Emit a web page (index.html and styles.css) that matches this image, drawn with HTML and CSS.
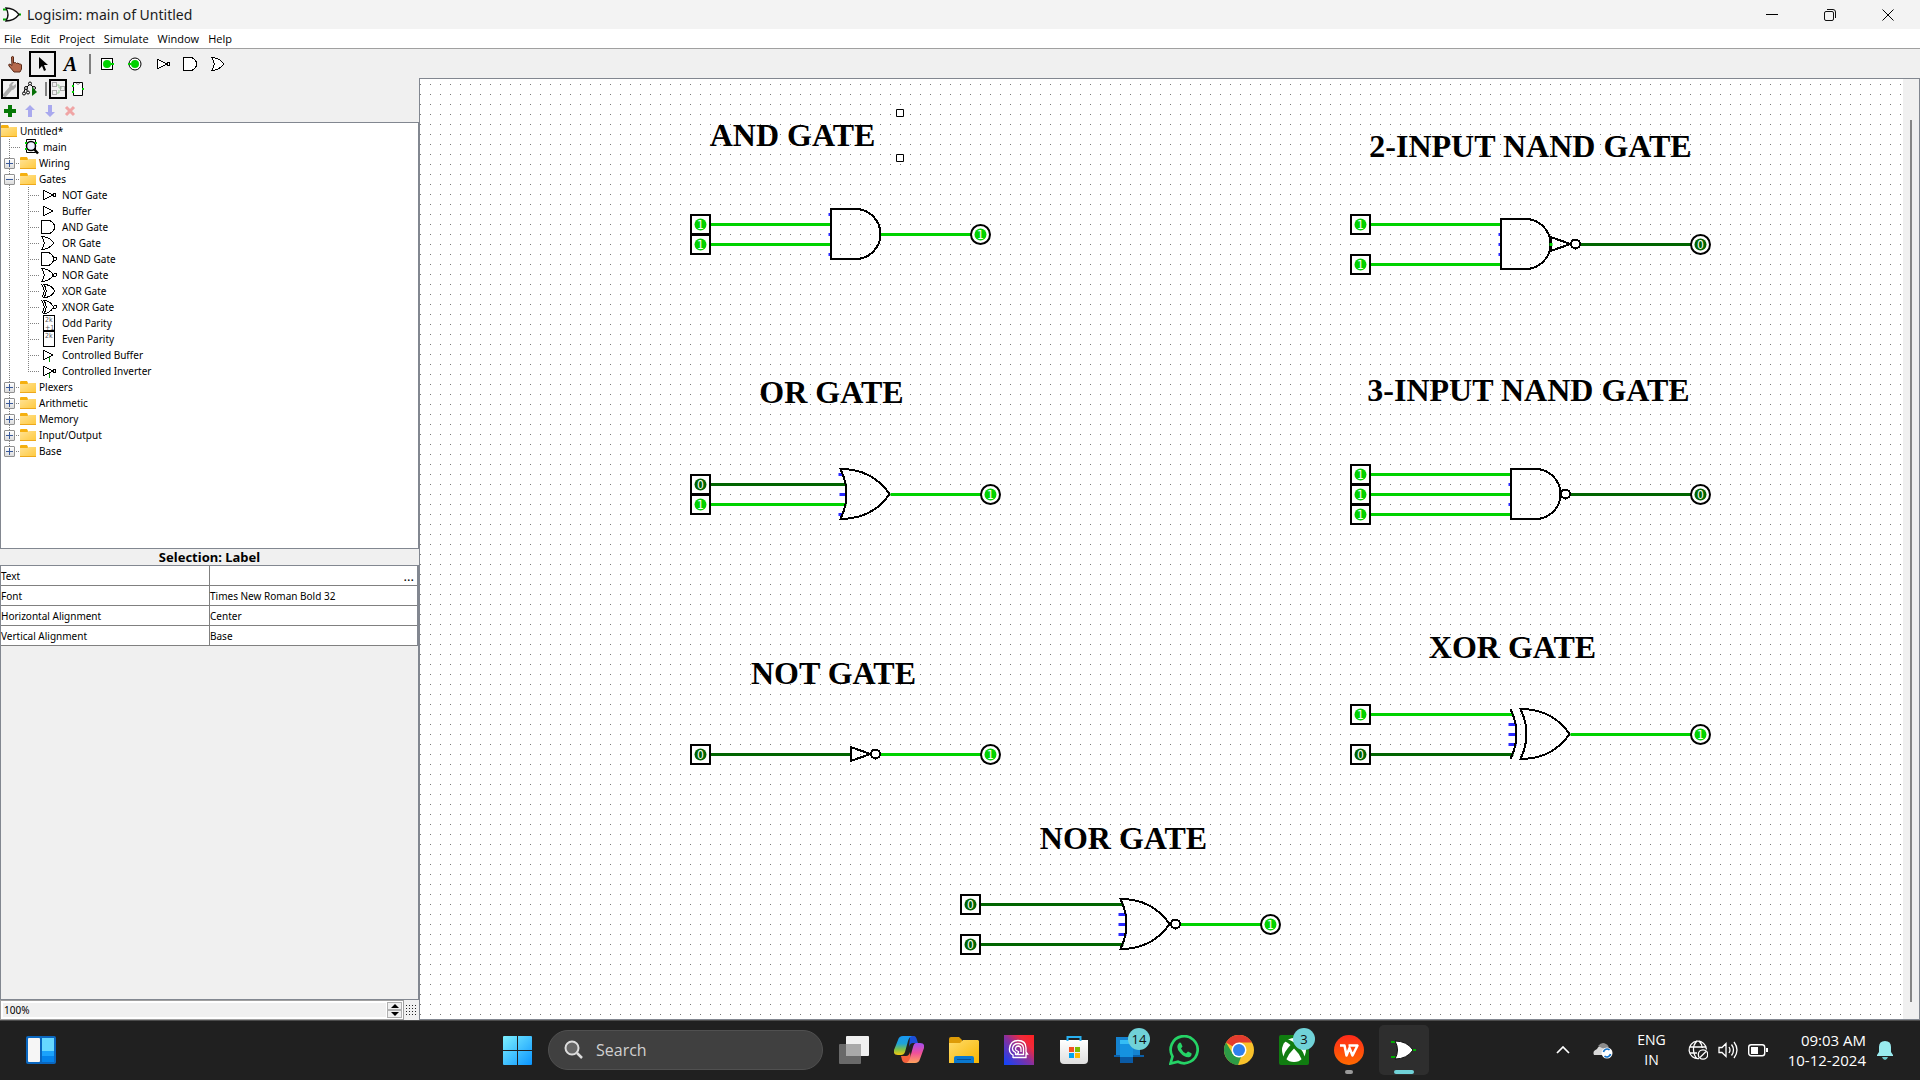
FILE: index.html
```html
<!DOCTYPE html>
<html lang="en">
<head>
<meta charset="utf-8">
<title>Logisim: main of Untitled</title>
<link rel="stylesheet" href="styles.css">
</head>
<body>
<svg class="defs" aria-hidden="true">
  <defs>
    <linearGradient id="folder-fill" x1="0" y1="0" x2="1" y2="1"><stop offset="0" stop-color="#ffe294"/><stop offset="1" stop-color="#ffc93c"/></linearGradient>
    <symbol id="i-folder" viewBox="0 0 16 16"><path d="M0 3q0-1 1-1h6l1 2v3H0z" fill="#f5b010"/><path d="M0 5h7l2-1h7v10H0z" fill="url(#folder-fill)"/><path d="M0 13.500h16" stroke="#eda81c"/></symbol>
    <symbol id="i-not" viewBox="0 0 16 16"><path d="M2 3v10L12 8z"/><circle cx="13.500" cy="8" r="1.500"/></symbol>
    <symbol id="i-buffer" viewBox="0 0 16 16"><path d="M2 3v10L12 8z"/></symbol>
    <symbol id="i-and" viewBox="0 0 16 16"><path d="M.5 1.500H7a6.500 6.500 0 0 1 0 13H.5z"/></symbol>
    <symbol id="i-or" viewBox="0 0 16 16"><path d="M.5 1.500Q8 1.500 13 8Q8 14.500 .5 14.500Q6 8 .5 1.500z"/></symbol>
    <symbol id="i-nand" viewBox="0 0 16 16"><path d="M.5 1.500H6a6.500 6.500 0 0 1 0 13H.5z"/><circle cx="14" cy="8" r="1.500"/></symbol>
    <symbol id="i-nor" viewBox="0 0 16 16"><path d="M.5 1.500Q8 1.500 12.500 8Q8 14.500 .5 14.500Q6 8 .5 1.500z"/><circle cx="14" cy="8" r="1.500"/></symbol>
    <symbol id="i-xor" viewBox="0 0 16 16"><path d="M3 1.500Q10 1.500 14 8Q10 14.500 3 14.500Q7.500 8 3 1.500zM.5 1.500Q6 8 .5 14.500"/></symbol>
    <symbol id="i-xnor" viewBox="0 0 16 16"><path d="M3 1.500Q9 1.500 12.500 8Q9 14.500 3 14.500Q7.500 8 3 1.500zM.5 1.500Q6 8 .5 14.500"/><circle cx="14" cy="8" r="1.500"/></symbol>
    <symbol id="i-cbuf" viewBox="0 0 16 16"><path d="M2 3v10L12 8z"/><path d="M8.500 10v5" stroke="#009000"/></symbol>
    <symbol id="i-cinv" viewBox="0 0 16 16"><path d="M2 3v10L12 8z"/><circle cx="13.500" cy="8" r="1.500"/><path d="M8.500 10v5" stroke="#009000"/></symbol>
    <symbol id="i-odd" viewBox="0 0 16 16"><path d="M2.500 .5h11v15h-11z"/><text class="parity" x="4" y="7">2k</text><text class="parity" x="4" y="15">+1</text></symbol>
    <symbol id="i-even" viewBox="0 0 16 16"><path d="M2.500 .5h11v15h-11z"/><text class="parity" x="4" y="7">2k</text></symbol>
    <symbol id="pin-in" viewBox="-11 -11 22 22"><rect x="-9.500" y="-9.500" width="19" height="19" fill="none" stroke="#000" stroke-width="2"/><circle r="6"/></symbol>
    <symbol id="pin-out" viewBox="-11 -11 22 22"><circle r="9.500" fill="#fff" stroke="#000" stroke-width="2"/><circle r="6"/></symbol>
    <pattern id="dots" width="10" height="10" y="5" patternUnits="userSpaceOnUse"><rect width="1" height="1" fill="#777"/></pattern>
    <linearGradient id="win" x1="0" y1="0" x2="1" y2="1"><stop offset="0" stop-color="#7df0ff"/><stop offset="1" stop-color="#0a95ff"/></linearGradient>
    <linearGradient id="cop-a" x1="0" y1="0" x2="0" y2="1"><stop offset="0" stop-color="#1797f2"/><stop offset=".4" stop-color="#1fa3d8"/><stop offset=".7" stop-color="#7cc04a"/><stop offset="1" stop-color="#f6c90e"/></linearGradient>
    <linearGradient id="cop-b" x1="0" y1="0" x2="0" y2="1"><stop offset="0" stop-color="#a34df0"/><stop offset=".5" stop-color="#f0509a"/><stop offset="1" stop-color="#ffa35c"/></linearGradient>
    <linearGradient id="exp" x1="0" y1="0" x2="1" y2="1"><stop offset="0" stop-color="#ffdc6b"/><stop offset="1" stop-color="#f7b500"/></linearGradient>
    <linearGradient id="pur" x1="0" y1="1" x2="1" y2="0"><stop offset="0" stop-color="#0a45ff"/><stop offset=".5" stop-color="#8a2f9c"/><stop offset=".75" stop-color="#f02a3c"/><stop offset="1" stop-color="#ff2020"/></linearGradient>
    <linearGradient id="wps" x1="0" y1="0" x2="0" y2="1"><stop offset="0" stop-color="#ff2a1a"/><stop offset="1" stop-color="#ff6a00"/></linearGradient>
    <linearGradient id="store" x1="0" y1="0" x2="0" y2="1"><stop offset="0" stop-color="#fff"/><stop offset="1" stop-color="#dedede"/></linearGradient>
  </defs>
</svg>

<div class="window">
  <header class="titlebar">
    <svg class="app-icon" width="18" height="16" viewBox="0 0 18 16"><path d="M0 2.500h4M0 12.500h4M16 7.500h2" stroke="#0a0" stroke-width="2"/><path d="M3 1Q11 1 16 7.500Q11 14 3 14Q7 7.500 3 1z" fill="#fff" stroke="#111" stroke-width="1.300"/></svg>
    <h1>Logisim: main of Untitled</h1>
    <div class="win-controls">
      <button aria-label="Minimize"><svg width="12" height="12"><path d="M0 5.500h12" stroke="#000"/></svg></button>
      <button aria-label="Restore"><svg width="12" height="12" fill="none" stroke="#111"><rect x=".5" y="2.500" width="9" height="9" rx="1.500"/><path d="M3 .5h6q2.500 0 2.500 2.500v6"/></svg></button>
      <button aria-label="Close"><svg width="12" height="12"><path d="M.5 .5l11 11M11.500 .5l-11 11" stroke="#000"/></svg></button>
    </div>
  </header>
  <nav class="menubar">
    <button>File</button><button>Edit</button><button>Project</button><button>Simulate</button><button>Window</button><button>Help</button>
  </nav>

  <div class="toolbar">
    <button aria-label="Poke tool"><svg width="18" height="18" viewBox="0 0 18 18"><path d="M5.500 2q1.500-1.500 2 0v6l2-.5 1 1 1.500-.5 1 1q2-.5 2.500 1v4L14 17H8L3 11q-1-2 1-2l2 1.500z" fill="#b5694c" stroke="#5a2a18"/></svg></button>
    <button class="on" aria-label="Edit tool"><svg width="18" height="18" viewBox="0 0 18 18"><path d="M5 2v12l3-3 2 5 2-1-2-5h4z" fill="#000"/></svg></button>
    <button class="text-tool" aria-label="Text tool">A</button>
    <span class="sep"></span>
    <button aria-label="Input pin"><svg width="16" height="16"><rect x="2.500" y="2.500" width="11" height="11" fill="#fff" stroke="#000"/><circle cx="8" cy="8" r="4" fill="#00d200"/><path d="M12 8h3" stroke="#00d200" stroke-width="2"/></svg></button>
    <button aria-label="Output pin"><svg width="16" height="16"><circle cx="8" cy="8" r="6" fill="#fff" stroke="#000"/><circle cx="8" cy="8" r="4" fill="#00d200"/><path d="M1 8h3" stroke="#00d200" stroke-width="2"/></svg></button>
    <button aria-label="NOT gate"><svg class="gate" width="16" height="16"><use href="#i-not"/></svg></button>
    <button aria-label="AND gate"><svg class="gate" width="16" height="16"><use href="#i-and"/></svg></button>
    <button aria-label="OR gate"><svg class="gate" width="16" height="16"><use href="#i-or"/></svg></button>
  </div>

  <div class="work">
    <aside class="sidebar">
      <div class="views">
        <button class="on" aria-label="View toolbox"><svg width="14" height="16"><path d="M2 14l6-7" stroke="#aaa" stroke-width="4" stroke-linecap="round"/><path d="M7 8L6 4l3-3h2L9 4l1 1 3-2v3l-3 3z" fill="#aaa"/></svg></button>
        <button aria-label="View simulation tree"><svg width="16" height="16" fill="none" stroke="#000"><path d="M7 4L5 6M9 4l2 2M3 8l-1 3M5 8v2"/><circle cx="8" cy="2.500" r="1.500"/><circle cx="4" cy="7" r="1.500"/><circle cx="12" cy="7" r="1.500"/><circle cx="2" cy="12.500" r="1.500"/><circle cx="6" cy="11.500" r="1.500"/><path d="M10 6v9l5-4z" fill="#067006" stroke="none"/></svg></button>
        <span class="sep"></span>
        <button class="on" aria-label="Edit circuit layout"><svg width="14" height="16" fill="none" stroke="#aaa"><path d="M5 4h3v3h3M5 12h3V9" stroke="#9c9"/><rect x="1.500" y="1.500" width="4" height="4"/><rect x="1.500" y="9.500" width="4" height="4"/><rect x="9.500" y="5.500" width="4" height="4"/></svg></button>
        <button aria-label="Edit circuit appearance"><svg width="14" height="16"><path d="M2.500 1.500h9v13h-9z" fill="#fff" stroke="#000"/><path d="M5 2q2 3 4 0" fill="none" stroke="#888"/><path d="M1 5h2M1 11h2M11 8h2" stroke="#00d200" stroke-width="2"/></svg></button>
      </div>
      <div class="edits">
        <button aria-label="Add circuit"><svg width="12" height="12"><path d="M6 0v12M0 6h12" stroke="#067806" stroke-width="4"/></svg></button>
        <button aria-label="Move circuit up"><svg width="12" height="12"><path d="M6 0l5 5H8v7H4V5H1z" fill="#a9a9ee"/></svg></button>
        <button aria-label="Move circuit down"><svg width="12" height="12"><path d="M6 12l5-5H8V0H4v7H1z" fill="#a9a9ee"/></svg></button>
        <button aria-label="Remove circuit"><svg width="12" height="12"><path d="M2 2l8 8M10 2l-8 8" stroke="#f0a5a5" stroke-width="3"/></svg></button>
      </div>

      <div class="tree">
        <div class="row"><svg width="16" height="16"><use href="#i-folder"/></svg><span>Untitled*</span></div>
        <ul class="level1">
          <li><div class="row leaf1"><i class="stub"></i><svg width="16" height="16" fill="none"><path d="M2.500 .5h9v13h-9z" stroke="#000"/><circle cx="7" cy="7" r="4.500" fill="#eef" stroke="#000" stroke-width="1.500"/><path d="M10 10l4 4.500" stroke="#000" stroke-width="2.500"/><path d="M1 4h2M1 10h2M11 4h2" stroke="#00d200" stroke-width="2"/></svg><span>main</span></div></li>
          <li><div class="row lib"><button class="toggle" aria-label="Expand"></button><i class="stub"></i><svg width="16" height="16"><use href="#i-folder"/></svg><span>Wiring</span></div></li>
          <li><div class="row lib"><button class="toggle open" aria-label="Collapse"></button><i class="stub"></i><svg width="16" height="16"><use href="#i-folder"/></svg><span>Gates</span></div>
            <ul class="level2">
              <li class="row"><i class="stub"></i><svg class="gate" width="16" height="16"><use href="#i-not"/></svg><span>NOT Gate</span></li>
              <li class="row"><i class="stub"></i><svg class="gate" width="16" height="16"><use href="#i-buffer"/></svg><span>Buffer</span></li>
              <li class="row"><i class="stub"></i><svg class="gate" width="16" height="16"><use href="#i-and"/></svg><span>AND Gate</span></li>
              <li class="row"><i class="stub"></i><svg class="gate" width="16" height="16"><use href="#i-or"/></svg><span>OR Gate</span></li>
              <li class="row"><i class="stub"></i><svg class="gate" width="16" height="16"><use href="#i-nand"/></svg><span>NAND Gate</span></li>
              <li class="row"><i class="stub"></i><svg class="gate" width="16" height="16"><use href="#i-nor"/></svg><span>NOR Gate</span></li>
              <li class="row"><i class="stub"></i><svg class="gate" width="16" height="16"><use href="#i-xor"/></svg><span>XOR Gate</span></li>
              <li class="row"><i class="stub"></i><svg class="gate" width="16" height="16"><use href="#i-xnor"/></svg><span>XNOR Gate</span></li>
              <li class="row"><i class="stub"></i><svg class="gate" width="16" height="16"><use href="#i-odd"/></svg><span>Odd Parity</span></li>
              <li class="row"><i class="stub"></i><svg class="gate" width="16" height="16"><use href="#i-even"/></svg><span>Even Parity</span></li>
              <li class="row"><i class="stub"></i><svg class="gate" width="16" height="16"><use href="#i-cbuf"/></svg><span>Controlled Buffer</span></li>
              <li class="row"><i class="stub"></i><svg class="gate" width="16" height="16"><use href="#i-cinv"/></svg><span>Controlled Inverter</span></li>
            </ul>
          </li>
          <li><div class="row lib"><button class="toggle" aria-label="Expand"></button><i class="stub"></i><svg width="16" height="16"><use href="#i-folder"/></svg><span>Plexers</span></div></li>
          <li><div class="row lib"><button class="toggle" aria-label="Expand"></button><i class="stub"></i><svg width="16" height="16"><use href="#i-folder"/></svg><span>Arithmetic</span></div></li>
          <li><div class="row lib"><button class="toggle" aria-label="Expand"></button><i class="stub"></i><svg width="16" height="16"><use href="#i-folder"/></svg><span>Memory</span></div></li>
          <li><div class="row lib"><button class="toggle" aria-label="Expand"></button><i class="stub"></i><svg width="16" height="16"><use href="#i-folder"/></svg><span>Input/Output</span></div></li>
          <li><div class="row lib"><button class="toggle" aria-label="Expand"></button><i class="stub"></i><svg width="16" height="16"><use href="#i-folder"/></svg><span>Base</span></div></li>
        </ul>
      </div>

      <h2>Selection: Label</h2>
      <div class="attributes">
        <table>
          <tr><th scope="row">Text</th><td class="more"><button aria-label="Edit text">...</button></td></tr>
          <tr><th scope="row">Font</th><td>Times New Roman Bold 32</td></tr>
          <tr><th scope="row">Horizontal Alignment</th><td>Center</td></tr>
          <tr><th scope="row">Vertical Alignment</th><td>Base</td></tr>
        </table>
      </div>
      <div class="zoom">
        <div class="spinner">
          <input type="text" value="100%" aria-label="Zoom">
          <div class="arrows">
            <button aria-label="Zoom in"><svg width="8" height="4"><path d="M4 0l4 4H0z"/></svg></button>
            <button aria-label="Zoom out"><svg width="8" height="4"><path d="M4 4l4-4H0z"/></svg></button>
          </div>
        </div>
        <button class="grid-toggle" aria-label="Show grid"></button>
      </div>
    </aside>

    <main class="canvas">
      <svg class="sheet" width="100%" height="100%">
        <rect width="100%" height="100%" fill="url(#dots)"/>
        <g transform="translate(.5 -4.500)">
          <g class="label">
            <text x="372" y="71">AND GATE</text>
            <text x="1110" y="82">2-INPUT NAND GATE</text>
            <text x="411" y="328">OR GATE</text>
            <text x="1108" y="326">3-INPUT NAND GATE</text>
            <text x="413" y="609">NOT GATE</text>
            <text x="1092" y="583">XOR GATE</text>
            <text x="703" y="774">NOR GATE</text>
          </g>
          <path class="handle" d="M476 35h7v7h-7zM476 80h7v7h-7z"/>
          <path class="open-pin" d="M408 140h3M408 160h3M408 180h3M1078 160h3M1078 170h3M1078 180h3M1088 410h3M1088 430h3M418 400h4M419 420h7M418 440h4M1088 650h8M1088 660h8M1088 670h8M698 840h8M698 850h8M698 860h8"/>
          <path class="wire hi" d="M289 150H411M289 170H411M460 160H551M949 150H1081M949 190H1081M289 430H426M470 420H561M949 400H1091M949 420H1091M949 440H1091M460 680H561M949 640H1093M1150 660H1271M760 850H841"/>
          <path class="wire lo" d="M1160 170H1271M289 410H426M1150 420H1271M289 680H431M949 680H1093M559 830H703M559 870H703"/>
          <g class="shape" transform="translate(0 -.5)">
            <path d="M410 135h25a25 25 0 0 1 0 50h-25z"/>
            <path d="M1080 145h25a25 25 0 0 1 0 50h-25z"/>
            <path d="M1130 163v14L1150 170z"/><circle cx="1155" cy="170" r="4.500"/>
            <path d="M420 395Q452 395 469 420Q452 445 420 445Q432 420 420 395z"/>
            <path d="M1090 395h25a25 25 0 0 1 0 50h-25z"/><circle cx="1145" cy="420" r="4.500"/>
            <path d="M430 673v14L450 680z"/><circle cx="455" cy="680" r="4.500"/>
            <path d="M1100 635Q1132 635 1149 660Q1132 685 1100 685Q1112 660 1100 635zM1090 635Q1102 660 1090 685"/>
            <path d="M700 825Q732 825 749 850Q732 875 700 875Q712 850 700 825z"/><circle cx="755" cy="850" r="4.500"/>
          </g>
          <path class="wire hi" d="M1129 170h3"/>
          <g class="hi pins">
            <use href="#pin-in" x="269" y="139" width="22" height="22"/><use href="#pin-in" x="269" y="159" width="22" height="22"/><use href="#pin-out" x="549" y="149" width="22" height="22"/>
            <use href="#pin-in" x="929" y="139" width="22" height="22"/><use href="#pin-in" x="929" y="179" width="22" height="22"/>
            <use href="#pin-in" x="269" y="419" width="22" height="22"/><use href="#pin-out" x="559" y="409" width="22" height="22"/>
            <use href="#pin-in" x="929" y="389" width="22" height="22"/><use href="#pin-in" x="929" y="409" width="22" height="22"/><use href="#pin-in" x="929" y="429" width="22" height="22"/>
            <use href="#pin-out" x="559" y="669" width="22" height="22"/>
            <use href="#pin-in" x="929" y="629" width="22" height="22"/><use href="#pin-out" x="1269" y="649" width="22" height="22"/>
            <use href="#pin-out" x="839" y="839" width="22" height="22"/>
          </g>
          <g class="lo pins">
            <use href="#pin-out" x="1269" y="159" width="22" height="22"/><use href="#pin-in" x="269" y="399" width="22" height="22"/><use href="#pin-out" x="1269" y="409" width="22" height="22"/>
            <use href="#pin-in" x="269" y="669" width="22" height="22"/><use href="#pin-in" x="929" y="669" width="22" height="22"/>
            <use href="#pin-in" x="539" y="819" width="22" height="22"/><use href="#pin-in" x="539" y="859" width="22" height="22"/>
          </g>
          <g class="bit">
            <text x="280" y="154">1</text><text x="280" y="174">1</text><text x="560" y="164">1</text>
            <text x="940" y="154">1</text><text x="940" y="194">1</text><text x="1280" y="174">0</text>
            <text x="280" y="414">0</text><text x="280" y="434">1</text><text x="570" y="424">1</text>
            <text x="940" y="404">1</text><text x="940" y="424">1</text><text x="940" y="444">1</text><text x="1280" y="424">0</text>
            <text x="280" y="684">0</text><text x="570" y="684">1</text>
            <text x="940" y="644">1</text><text x="940" y="684">0</text><text x="1280" y="664">1</text>
            <text x="550" y="834">0</text><text x="550" y="874">0</text><text x="850" y="854">1</text>
          </g>
        </g>
      </svg>
      <div class="scroll"><div class="thumb"></div></div>
    </main>
  </div>
</div>

<footer class="taskbar">
  <div class="side"><button class="widgets" aria-label="Widgets"><svg width="30" height="28"><rect width="30" height="28" rx="2" fill="#0a67c0"/><rect x="2" y="2" width="12" height="24" rx="1" fill="#f6f6f6"/><rect x="16" y="2" width="12" height="13" fill="#67d8ff"/><path d="M16 15h12v5H16z" fill="#1ba2fb"/><path d="M16 20h12v6H16z" fill="#0583ea"/></svg></button></div>
  <div class="apps">
    <button class="start" aria-label="Start"><svg width="29" height="29" fill="url(#win)"><path d="M0 1q0-1 1-1h13v14H0zM15 0h13q1 0 1 1v13H15zM0 15h14v14H1q-1 0-1-1zM15 15h14v13q0 1-1 1H15z"/></svg></button>
    <label class="search"><svg width="20" height="20" fill="none" stroke="#ddd"><circle cx="8" cy="8" r="6.500" fill="#666" stroke-width="2"/><path d="M13 13l5 5" stroke-width="2.500"/></svg><input type="text" placeholder="Search" aria-label="Search"></label>
    <button aria-label="Task view"><svg width="30" height="30"><rect x="7" y="1" width="23" height="20" rx="1" fill="#f0f0f0"/><rect y="9" width="22" height="20" rx="1" fill="#777" opacity=".85"/><path d="M7 9h15v12H7z" fill="#a9a9a9"/></svg></button>
    <button aria-label="Copilot"><svg width="30" height="30"><path d="M16 1h4q2 0 3 4l1 3h-5q-3 0-4 4z" fill="#1b4fd8"/><path d="M7 21h5q3 0 4-4l1 7q-1 4-5 4-3 0-4-3z" fill="#f4603c"/><path d="M9 1h9q-3 1-4 5l-3 11q-1 3-4 3H4q-5 0-4-5L4 5q1-4 5-4z" fill="url(#cop-a)"/><path d="M22 8h4q5 0 4 5l-4 11q-1 4-5 4h-9q3-1 4-5l3-11q1-4 3-4z" fill="url(#cop-b)"/></svg></button>
    <button aria-label="File Explorer"><svg width="30" height="30"><path d="M0 4q0-2 2-2h8l3 3v5H0z" fill="#dd9b07"/><path d="M0 8h11l3-3h15l1 1v22H0z" fill="url(#exp)"/><path d="M5 28v-5q0-2 2-2h16q2 0 2 2v5z" fill="#0a78cf"/><path d="M8 24.500h14" stroke="#064f94"/></svg></button>
    <button aria-label="Assistant"><svg width="30" height="30" fill="none" stroke="#fff"><path d="M0 0h30v30H0z" fill="url(#pur)" stroke="none"/><path d="M9 23v-3Q5 18 5.500 13.500Q6.500 5.500 14 5.500Q22 5.500 22 13v4l1.500 2H22v3.500H9" stroke-width="1.300"/><path d="M11.500 20v-2.500Q8 16 8.500 13Q9.500 8.500 14 8.500Q19 8.500 19.500 13v6.500h-8q3 0 3-3Q11 15.500 11.500 13.500Q12 11 14.500 11Q17 11.500 17 14v3" stroke-width="1.300"/></svg></button>
    <button aria-label="Microsoft Store"><svg width="30" height="30"><path d="M1 5h28v20q0 4-4 4H5q-4 0-4-4z" fill="url(#store)"/><path d="M8.500 6V2h13v4" fill="none" stroke="#28b0f0" stroke-width="2"/><path d="M10 12h5v5h-5z" fill="#f25022"/><path d="M16 12h5v5h-5z" fill="#7fba00"/><path d="M10 18h5v5h-5z" fill="#00a4ef"/><path d="M16 18h5v5h-5z" fill="#ffb900"/></svg></button>
    <button aria-label="Phone Link"><svg width="30" height="30"><path d="M2 2h24v20H2z" fill="#1583d0"/><path d="M0 20h30v2H0z" fill="#0b5fa8"/><path d="M6 5h13v23H6z" fill="#1592e0"/><path d="M6 22h13v6H6z" fill="#0a5aa5"/><path d="M6 5h13v4H6z" fill="#35bdf5"/></svg><span class="badge">14</span></button>
    <button aria-label="WhatsApp"><svg width="30" height="30"><path d="M1.500 28.500l2-7A13.500 13.500 0 1 1 9 26.700z" fill="none" stroke="#25d366" stroke-width="2.700"/><path d="M10 8q1-1 2 0l1.500 3.500-1.500 2q2 4 5 5l2-2 3.500 1.700q.5 3-2.500 4Q15 22.500 11 17.500Q6 12 10 8z" fill="#25d366"/></svg></button>
    <button aria-label="Chrome"><svg width="30" height="30"><circle cx="15" cy="15" r="15" fill="#f9c22b"/><path d="M15 15L2 7.500A15 15 0 0 1 28 7.500H15z" fill="#e33b2e"/><path d="M2 7.500L9 19l8 3-3 8A15 15 0 0 1 2 7.500z" fill="#2d9b46"/><circle cx="15" cy="15" r="7.500" fill="#fff"/><circle cx="15" cy="15" r="6" fill="#2f80ed"/></svg></button>
    <button aria-label="Xbox"><svg width="30" height="30"><rect width="30" height="30" rx="2" fill="#107c10"/><circle cx="15" cy="15" r="12" fill="#fff"/><path d="M7 4Q10 4 15 7.500Q20 4 23 4L25 6Q22 7 18.500 10Q25 17 25.500 22L23 25Q20 18 15 13.500Q10 18 7 25L4.500 22Q5 17 11.500 10Q8 7 5 6z" fill="#107c10"/></svg><span class="badge">3</span></button>
    <button class="running" aria-label="WPS Office"><svg width="30" height="30"><circle cx="15" cy="15" r="15" fill="url(#wps)"/><path d="M6 10.500h4.500l2 10 3-7.500 3 7.500 5-10h-9" fill="none" stroke="#fff" stroke-width="2.500" stroke-linejoin="round"/></svg></button>
    <button class="active" aria-label="Logisim"><svg width="30" height="30"><path d="M2 7h5M2 22h5M23 15h4" stroke="#0a0" stroke-width="2"/><path d="M6 6q12 0 18 9-6 9-18 9 5-9 0-18z" fill="#fff" stroke="#111"/></svg></button>
  </div>
  <div class="side tray">
    <button class="chevron" aria-label="Show hidden icons"><svg width="14" height="8"><path d="M1 7l6-6 6 6" fill="none" stroke="#fff" stroke-width="1.700"/></svg></button>
    <svg width="22" height="18"><path d="M2 14q-2-4 3-6 2-4 7-3 4 0 4 5l-3 4z" fill="#d8d8d8"/><path d="M6 5q4-5 8-2 3 1 3 6l-7-2z" fill="#8b8b8b"/><circle cx="15" cy="12" r="5.500" fill="#fff"/><path d="M11.500 11a3.600 3.600 0 0 1 6-2M18.500 13a3.600 3.600 0 0 1-6 2" fill="none" stroke="#1070c8" stroke-width="1.700"/></svg>
    <div class="lang">ENG<br>IN</div>
    <svg width="20" height="20" fill="none" stroke="#fff" stroke-width="1.300"><path d="M11 18.500A8.700 8.700 0 1 1 18.500 9.500M1.500 7h17M1.500 13H9M9 1Q5 5 5.500 10Q6 16 9 18.500M11 1Q14 4 14.300 8"/><circle cx="15" cy="14.500" r="4.700"/><path d="M12 17.500l6-6"/></svg>
    <svg class="gap" width="20" height="20" fill="none" stroke="#fff" stroke-width="1.300"><path d="M1 7.500h3l4-4v13l-4-4H1zM11 7q2 3 0 6M13.500 4.500q4 5.500 0 11M16 2q6 8 0 16"/></svg>
    <svg class="gap" width="20" height="20"><rect x=".7" y="4.700" width="16" height="11" rx="2.500" fill="none" stroke="#fff" stroke-width="1.400"/><path d="M3 7h7v7H3zM18 8h2v4h-2z" fill="#fff"/></svg>
    <time class="clock">09:03 AM<br>10-12-2024</time>
    <svg width="18" height="20"><path d="M9 1q6 0 6 6v5l2 3v1H1v-1l2-3V7q0-6 6-6z" fill="#99ebef"/><path d="M6 17h6q-1 3-3 3t-3-3z" fill="#6cc6cb"/></svg>
  </div>
</footer>
</body>
</html>
```
FILE: styles.css
```css
* { box-sizing: border-box; }

body {
  margin: 0;
  height: 100vh;
  display: flex;
  flex-direction: column;
  overflow: hidden;
  font-family: "Noto Sans", "Open Sans", sans-serif;
  font-size: 10px;
  color: #000;
  background: #f0f0f0;
}

button, input {
  margin: 0;
  padding: 0;
  border: 0;
  background: none;
  font: inherit;
  color: inherit;
}

svg { display: block; flex: none; }
.defs { position: absolute; width: 0; height: 0; }
ul { list-style: none; margin: 0; padding: 0; }

.window {
  flex: 1;
  min-height: 0;
  display: flex;
  flex-direction: column;
}

/* Title bar and menu */
.titlebar {
  height: 29px;
  display: flex;
  align-items: center;
  padding-left: 3px;
  gap: 6px;
  background: #f3f3f3;
}
.titlebar h1 {
  flex: 1;
  margin: 0;
  font: 14px/20px "Noto Sans", "Open Sans", sans-serif;
  color: #1b1b1b;
}
.win-controls { display: flex; margin-right: 3px; }
.win-controls button {
  width: 58px;
  height: 29px;
  display: grid;
  place-items: center;
}

.menubar {
  height: 21px;
  display: flex;
  gap: 9px;
  padding: 0 4px 2px;
  background: #fff;
  border-bottom: 1px solid #f0f0f0;
  box-shadow: inset 0 -1px #a0a0a0;
  font: 11px/19px "Open Sans", "Noto Sans", sans-serif;
}

/* Tool bars */
.toolbar {
  height: 28px;
  display: flex;
  align-items: center;
  gap: 1px;
  padding-left: 1px;
}
.toolbar button {
  width: 27px;
  height: 26px;
  display: grid;
  place-items: center;
}
.toolbar .on, .views .on { border: 2px solid #000; }
.toolbar .text-tool { font: italic bold 20px "Liberation Serif", serif; }
.sep { width: 2px; background: #808080; }
.toolbar .sep { height: 20px; margin: 0 1px 0 4px; }
.gate { fill: none; stroke: #000; shape-rendering: crispEdges; }
.toolbar .gate { fill: #fff; }
.parity { font: 7px "DejaVu Sans Condensed", sans-serif; fill: #555; stroke: none; }

.work {
  flex: 1;
  min-height: 0;
  display: flex;
}

.sidebar {
  width: 419px;
  flex: none;
  display: flex;
  flex-direction: column;
}
.views {
  height: 21px;
  display: flex;
  align-items: center;
  gap: 2px;
  padding: 1px 1px 0;
}
.views button {
  width: 18px;
  height: 20px;
  display: grid;
  place-items: center;
}
.views .sep { height: 14px; margin: 0 0 0 4px; }
.edits {
  height: 23px;
  display: flex;
  align-items: center;
}
.edits button {
  width: 20px;
  height: 20px;
  display: grid;
  place-items: center;
}

/* Circuit and library tree */
.tree {
  height: 427px;
  background: #fff;
  border: 1px solid #828790;
  line-height: 16px;
}
.row {
  display: flex;
  align-items: center;
  height: 16px;
}
.row > span { margin-left: 3px; }
.stub {
  height: 1px;
  background: repeating-linear-gradient(90deg, #808080 0 1px, transparent 1px 2px);
}
.level1, .level2 {
  background: repeating-linear-gradient(#808080 0 1px, transparent 1px 2px) 8px 0 / 1px calc(100% - 8px) no-repeat;
}
.level2 { background-position: 27px 0; }
.leaf1 { padding-left: 8px; }
.leaf1 .stub { width: 12px; margin-right: 3px; }
.lib { padding-left: 3px; }
.lib .stub { width: 4px; margin-left: 1px; }
.level2 .row { padding-left: 27px; }
.level2 .stub { width: 11px; margin-right: 2px; }
.level2 .row > span { margin-left: 5px; }
.toggle {
  width: 11px;
  height: 11px;
  border: 1px solid #919191;
  border-radius: 1px;
  background:
    linear-gradient(#3a5a9a, #3a5a9a) center / 7px 1px no-repeat,
    linear-gradient(#3a5a9a, #3a5a9a) center / 1px 7px no-repeat,
    linear-gradient(#fff, #dcdcdc);
}
.toggle.open {
  background:
    linear-gradient(#3a5a9a, #3a5a9a) center / 7px 1px no-repeat,
    linear-gradient(#fff, #dcdcdc);
}

/* Attribute table */
.sidebar h2 {
  margin: 0;
  height: 16px;
  font-size: 13px;
  line-height: 17px;
  text-align: center;
}
.attributes {
  flex: 1;
  border: 1px solid #828790;
}
.attributes table {
  width: 100%;
  table-layout: fixed;
  border-collapse: separate;
  border-spacing: 0;
  background: #fff;
  border-right: 1px solid #828790;
}
.attributes th, .attributes td {
  height: 20px;
  padding: 0;
  border-bottom: 1px solid #808080;
  font-weight: normal;
  text-align: left;
  line-height: 18px;
}
.attributes td { border-left: 1px solid #808080; }
.attributes .more { padding-right: 3px; }
.more button {
  display: block;
  margin-left: auto;
  font-size: 13px;
  line-height: 16px;
}

.zoom { display: flex; height: 20px; }
.spinner {
  flex: 1;
  display: flex;
  padding: 1px;
  border: 1px solid #a0a0a0;
  background: #fff;
}
.spinner input {
  flex: 1;
  padding-left: 1px;
  margin: 1px;
  background: #f0f0f0;
}
.arrows { width: 15px; display: grid; grid-template-rows: 1fr 1fr; }
.arrows button {
  display: grid;
  place-items: center;
  background: #f0f0f0;
  border: 1px solid #b0b0b0;
}
.grid-toggle {
  width: 15px;
  padding: 4px 2px;
}
.grid-toggle::before {
  content: "";
  display: block;
  height: 11px;
  background: conic-gradient(from 270deg at 1px 1px, #222 90deg, transparent 0) 0 0 / 3px 3px;
}

/* Drawing area */
.canvas {
  flex: 1;
  min-width: 0;
  display: flex;
  background: #fff;
  border: 1px solid #828790;
}
.sheet { flex: 1; min-width: 0; }
.scroll {
  width: 16px;
  display: flex;
  justify-content: center;
  padding: 41px 0 17px;
  background: #f0f0f0;
}
.thumb { width: 2px; background: #868686; }

.label text {
  font: bold 32px "Liberation Serif", serif;
  text-anchor: middle;
}
.bit text {
  font: 12px "DejaVu Sans Condensed", sans-serif;
  fill: #fff;
  text-anchor: middle;
}
.wire { fill: none; stroke-width: 3; }
.wire.hi { stroke: #00d200; }
.wire.lo { stroke: #006400; }
.pins.hi { fill: #00d200; }
.pins.lo { fill: #006400; }
.open-pin { stroke: #2a2aff; stroke-width: 3; }
.shape { fill: none; stroke: #000; stroke-width: 2; shape-rendering: crispEdges; }
.handle { fill: #fff; stroke: #000; }

/* Task bar */
.taskbar {
  height: 60px;
  flex: none;
  display: grid;
  grid-template-columns: 1fr auto 1fr;
  align-items: center;
  background: #202020;
  box-shadow: inset 0 1px #4c4c4c;
  color: #fff;
  font: 14px/20px "Open Sans", "Noto Sans", sans-serif;
}
.side { display: flex; align-items: center; }
.widgets { padding-left: 26px; }
.apps { display: flex; align-items: center; }
.apps > button {
  position: relative;
  width: 55px;
  height: 50px;
  display: grid;
  place-items: center;
}
.apps > .start { width: 56px; }
.search {
  width: 275px;
  height: 40px;
  margin: 0 3px;
  padding-left: 15px;
  display: flex;
  align-items: center;
  gap: 12px;
  border-radius: 20px;
  border: 1px solid #505050;
  background: #404040;
}
.search input { width: 180px; font-size: 16px; line-height: 24px; outline: 0; }
.search input::placeholder { color: #d0d0d0; opacity: 1; }
.badge {
  position: absolute;
  top: 3px;
  right: 6px;
  width: 22px;
  height: 22px;
  border-radius: 11px;
  background: #70d2d8;
  color: #111;
  font-size: 13px;
  line-height: 22px;
}
.apps > .active {
  width: 50px;
  margin: 0 2px 0 3px;
  border-radius: 5px;
  background: #2e2e2e;
}
.running::after, .active::after {
  content: "";
  position: absolute;
  bottom: 1px;
  left: 50%;
  width: 8px;
  height: 4px;
  margin-left: -4px;
  border-radius: 2px;
  background: #9a9a9a;
}
.active::after { width: 20px; margin-left: -10px; background: #70d2d8; }

.tray { justify-content: flex-end; padding-right: 26px; }
.chevron { margin-right: 22px; }
.lang { margin: 0 22px 0 23px; text-align: center; }
.gap { margin-left: 10px; }
.clock { margin: 0 10px 0 20px; font-size: 15px; text-align: right; }
```
